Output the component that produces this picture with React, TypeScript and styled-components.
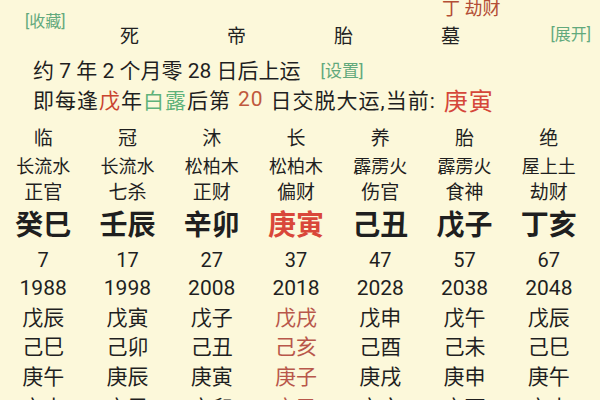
import React from "react";
import styled, { createGlobalStyle } from "styled-components";

const Global = createGlobalStyle`
  html, body { margin: 0; padding: 0; background: #fcf8da; }
  body { width: 600px; height: 400px; overflow: hidden;
    font-family: Roboto, "Noto Sans CJK SC", "Noto Sans", sans-serif; color: #1f1f1f; }
`;

const Page = styled.div`
  width: 600px;
  height: 400px;
  overflow: hidden;
  background: #fcf8da;
  display: flex;
  flex-direction: column;
  font-family: Roboto, "Noto Sans CJK SC", "Noto Sans", sans-serif;
`;

const Header = styled.div`
  display: grid;
  grid-template-columns: 76px repeat(4, 107px) 1fr;
  grid-template-rows: 24px 26px;
  height: 50px;
  flex: none;
`;

const LinkText = styled.span<{ $size?: number }>`
  color: #62a97c;
  font-size: ${(p) => p.$size ?? 16}px;
  white-space: nowrap;
`;

const Collect = styled(LinkText)`
  grid-column: 1;
  grid-row: 1 / 3;
  padding: 8px 0 0 25px;
`;

const Expand = styled(LinkText)`
  grid-column: 6;
  grid-row: 1 / 3;
  justify-self: end;
  padding: 21px 9px 0 0;
`;

const Hidden = styled.span`
  grid-column: 5;
  grid-row: 1;
  padding: 0 0 0 45px;
  margin-top: -2px;
  color: #b34e36;
  font-size: 18px;
  white-space: nowrap;
  line-height: 22px;
`;

const Stage = styled.span<{ $col: number }>`
  grid-column: ${(p) => p.$col};
  grid-row: 2;
  text-align: center;
  font-size: 19px;
  line-height: 26px;
  color: #222;
`;

const InfoLine = styled.div<{ $h: number; $spacing?: number }>`
  height: ${(p) => p.$h}px;
  flex: none;
  display: flex;
  align-items: center;
  padding-left: 33px;
  font-size: 21px;
  letter-spacing: ${(p) => p.$spacing ?? 0}px;
  white-space: nowrap;
  color: #1f1f1f;
`;

const Tone = styled.span<{ $c: "red" | "green" | "brown" | "current"; $size?: number; $gap?: number }>`
  color: ${(p) =>
    p.$c === "red" ? "#c9442f" : p.$c === "green" ? "#5fb27a" : p.$c === "brown" ? "#c0583d" : "#d5473a"};
  ${(p) => (p.$size ? `font-size: ${p.$size}px;` : "")}
  ${(p) => (p.$gap ? `margin: 0 ${p.$gap}px;` : "")}
`;

const Setting = styled(LinkText)`
  margin-left: 20px;
  font-size: 17px;
`;

const Current = styled(Tone)`
  margin-left: 8px;
`;

const Table = styled.div`
  margin-top: 15px;
  padding-left: 1px;
  width: 590px;
  display: flex;
  flex-direction: column;
  flex: none;
`;

const Row = styled.div<{ $h: number; $size: number; $bold?: boolean }>`
  display: grid;
  grid-template-columns: repeat(7, 1fr);
  height: ${(p) => p.$h}px;
  font-size: ${(p) => p.$size}px;
  font-weight: ${(p) => (p.$bold ? 700 : 400)};
  line-height: ${(p) => p.$h}px;
  flex: none;
`;

const Cell = styled.div<{ $tone?: "hot" | "soft" }>`
  text-align: center;
  white-space: nowrap;
  color: ${(p) => (p.$tone === "hot" ? "#d9473a" : p.$tone === "soft" ? "#b8574a" : "inherit")};
`;

type Col = {
  cs: string;
  ny: string;
  ss: string;
  gz: string;
  age: number;
  yr: number;
  ys: string[];
  cur?: boolean;
};

const cols: Col[] = [
  { cs: "临", ny: "长流水", ss: "正官", gz: "癸巳", age: 7, yr: 1988, ys: ["戊辰", "己巳", "庚午", "辛未"] },
  { cs: "冠", ny: "长流水", ss: "七杀", gz: "壬辰", age: 17, yr: 1998, ys: ["戊寅", "己卯", "庚辰", "辛巳"] },
  { cs: "沐", ny: "松柏木", ss: "正财", gz: "辛卯", age: 27, yr: 2008, ys: ["戊子", "己丑", "庚寅", "辛卯"] },
  { cs: "长", ny: "松柏木", ss: "偏财", gz: "庚寅", age: 37, yr: 2018, ys: ["戊戌", "己亥", "庚子", "辛丑"], cur: true },
  { cs: "养", ny: "霹雳火", ss: "伤官", gz: "己丑", age: 47, yr: 2028, ys: ["戊申", "己酉", "庚戌", "辛亥"] },
  { cs: "胎", ny: "霹雳火", ss: "食神", gz: "戊子", age: 57, yr: 2038, ys: ["戊午", "己未", "庚申", "辛酉"] },
  { cs: "绝", ny: "屋上土", ss: "劫财", gz: "丁亥", age: 67, yr: 2048, ys: ["戊辰", "己巳", "庚午", "辛未"] },
];

const yearRowHeights = [30, 29, 31, 30];

export default function App() {
  return (
    <Page>
      <Global />
      <Header>
        <Collect>[收藏]</Collect>
        <Hidden>丁 劫财</Hidden>
        {["死", "帝", "胎", "墓"].map((s, i) => (
          <Stage key={i} $col={i + 2}>
            {s}
          </Stage>
        ))}
        <Expand>[展开]</Expand>
      </Header>
      <InfoLine $h={38}>
        约 7 年 2 个月零 28 日后上运
        <Setting>[设置]</Setting>
      </InfoLine>
      <InfoLine $h={22} $spacing={1}>
        即每逢<Tone $c="red">戊</Tone>年<Tone $c="green">白露</Tone>后第<Tone $c="brown" $gap={7}>20</Tone>日交脱大运,当前:
        <Current $c="current" $size={24}>庚寅</Current>
      </InfoLine>
      <Table>
        <Row $h={28} $size={19}>
          {cols.map((c, i) => <Cell key={i}>{c.cs}</Cell>)}
        </Row>
        <Row $h={28} $size={18}>
          {cols.map((c, i) => <Cell key={i}>{c.ny}</Cell>)}
        </Row>
        <Row $h={24} $size={19}>
          {cols.map((c, i) => <Cell key={i}>{c.ss}</Cell>)}
        </Row>
        <Row $h={42} $size={28} $bold>
          {cols.map((c, i) => (
            <Cell key={i} $tone={c.cur ? "hot" : undefined}>{c.gz}</Cell>
          ))}
        </Row>
        <Row $h={26} $size={20}>
          {cols.map((c, i) => <Cell key={i}>{c.age}</Cell>)}
        </Row>
        <Row $h={30} $size={21}>
          {cols.map((c, i) => <Cell key={i}>{c.yr}</Cell>)}
        </Row>
        {yearRowHeights.map((h, r) => (
          <Row key={r} $h={h} $size={21}>
            {cols.map((c, i) => (
              <Cell key={i} $tone={c.cur ? "soft" : undefined}>{c.ys[r]}</Cell>
            ))}
          </Row>
        ))}
      </Table>
    </Page>
  );
}
